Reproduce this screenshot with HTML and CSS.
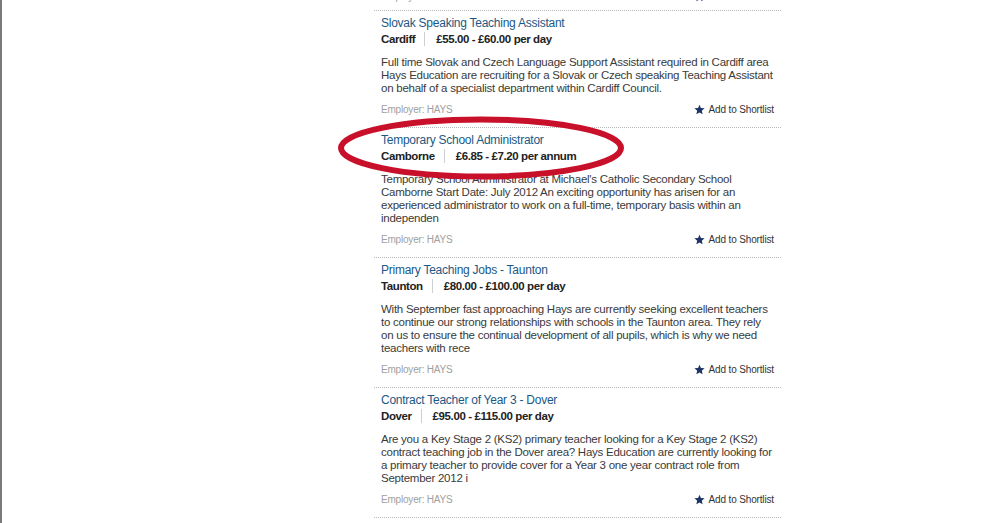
FILE: index.html
```html
<!DOCTYPE html>
<html>
<head>
<meta charset="utf-8">
<link rel="stylesheet" href="styles.css">
</head>
<body>
<div class="frame">
  <div class="list">
    <div class="tail">
      <span class="employer">Employer: HAYS</span>
      <span class="shortlist"><svg class="star" viewBox="0 0 24 24"><path d="M12 1.5l3.1 7.4 8 .6-6.1 5.2 1.9 7.8L12 18.3l-6.9 4.2 1.9-7.8L.9 9.5l8-.6z"/></svg>Add to Shortlist</span>
    </div>
    <div class="job">
      <div class="title">Slovak Speaking Teaching Assistant</div>
      <div class="meta"><span class="loc">Cardiff</span><span class="pay">£55.00 - £60.00 per day</span></div>
      <p class="desc">Full time Slovak and Czech Language Support Assistant required in Cardiff area<br>Hays Education are recruiting for a Slovak or Czech speaking Teaching Assistant<br>on behalf of a specialist department within Cardiff Council.</p>
      <div class="foot">
        <span class="employer">Employer: HAYS</span>
        <span class="shortlist"><svg class="star" viewBox="0 0 24 24"><path d="M12 1.5l3.1 7.4 8 .6-6.1 5.2 1.9 7.8L12 18.3l-6.9 4.2 1.9-7.8L.9 9.5l8-.6z"/></svg>Add to Shortlist</span>
      </div>
    </div>
    <div class="job">
      <div class="title">Temporary School Administrator</div>
      <div class="meta"><span class="loc">Camborne</span><span class="pay">£6.85 - £7.20 per annum</span></div>
      <p class="desc">Temporary School Administrator at Michael's Catholic Secondary School<br>Camborne Start Date: July 2012 An exciting opportunity has arisen for an<br>experienced administrator to work on a full-time, temporary basis within an<br>independen</p>
      <div class="foot">
        <span class="employer">Employer: HAYS</span>
        <span class="shortlist"><svg class="star" viewBox="0 0 24 24"><path d="M12 1.5l3.1 7.4 8 .6-6.1 5.2 1.9 7.8L12 18.3l-6.9 4.2 1.9-7.8L.9 9.5l8-.6z"/></svg>Add to Shortlist</span>
      </div>
    </div>
    <div class="job">
      <div class="title">Primary Teaching Jobs - Taunton</div>
      <div class="meta"><span class="loc">Taunton</span><span class="pay">£80.00 - £100.00 per day</span></div>
      <p class="desc">With September fast approaching Hays are currently seeking excellent teachers<br>to continue our strong relationships with schools in the Taunton area. They rely<br>on us to ensure the continual development of all pupils, which is why we need<br>teachers with rece</p>
      <div class="foot">
        <span class="employer">Employer: HAYS</span>
        <span class="shortlist"><svg class="star" viewBox="0 0 24 24"><path d="M12 1.5l3.1 7.4 8 .6-6.1 5.2 1.9 7.8L12 18.3l-6.9 4.2 1.9-7.8L.9 9.5l8-.6z"/></svg>Add to Shortlist</span>
      </div>
    </div>
    <div class="job">
      <div class="title">Contract Teacher of Year 3 - Dover</div>
      <div class="meta"><span class="loc">Dover</span><span class="pay">£95.00 - £115.00 per day</span></div>
      <p class="desc">Are you a Key Stage 2 (KS2) primary teacher looking for a Key Stage 2 (KS2)<br>contract teaching job in the Dover area? Hays Education are currently looking for<br>a primary teacher to provide cover for a Year 3 one year contract role from<br>September 2012 i</p>
      <div class="foot">
        <span class="employer">Employer: HAYS</span>
        <span class="shortlist"><svg class="star" viewBox="0 0 24 24"><path d="M12 1.5l3.1 7.4 8 .6-6.1 5.2 1.9 7.8L12 18.3l-6.9 4.2 1.9-7.8L.9 9.5l8-.6z"/></svg>Add to Shortlist</span>
      </div>
    </div>
    <div class="job">
      <div class="title">Primary Teacher - Bristol</div>
    </div>
  </div>
  <svg class="ring" viewBox="0 0 290 66" width="290" height="66"><ellipse cx="145" cy="33" rx="140" ry="28.5"/></svg>
</div>
</body>
</html>
```

FILE: styles.css
```css
html, body {
  margin: 0;
  padding: 0;
  background: #fff;
  overflow: hidden;
}
body {
  font-family: "Liberation Sans", Arial, sans-serif;
  width: 1000px;
  height: 523px;
}
.frame {
  position: relative;
  width: 998px;
  height: 523px;
  border-left: 2px solid #7a7a7a;
  overflow: hidden;
}
.list {
  width: 407px;
  margin-left: 372px;
  margin-top: -10px;
}
.tail {
  display: flex;
  justify-content: space-between;
  align-items: center;
  height: 14px;
  padding: 0 7px 6px 7px;
}
.job {
  border-top: 1px dotted #b8b8b8;
  padding: 4px 7px 10px 7px;
}
.title {
  font-size: 12px;
  line-height: 16px;
  letter-spacing: -0.25px;
  color: #1b5885;
}
.meta {
  display: flex;
  align-items: center;
  font-size: 11.5px;
  line-height: 16px;
  letter-spacing: -0.4px;
  font-weight: bold;
  color: #222;
}
.loc {
  padding-right: 9px;
  border-right: 1px solid #cfcfcf;
  line-height: 14px;
}
.pay {
  padding-left: 11px;
}
.desc {
  margin: 9px 0 0 0;
  font-size: 11.5px;
  line-height: 13px;
  letter-spacing: -0.25px;
  white-space: nowrap;
  color: #3a3a3a;
}
.foot {
  display: flex;
  justify-content: space-between;
  align-items: center;
  margin-top: 8px;
  height: 14px;
}
.employer {
  font-size: 10px;
  line-height: 14px;
  letter-spacing: -0.2px;
  color: #a0a0a0;
}
.shortlist {
  display: flex;
  align-items: center;
  font-size: 10px;
  line-height: 14px;
  letter-spacing: -0.15px;
  color: #333;
}
.star {
  width: 11px;
  height: 11px;
  margin-right: 4px;
  margin-top: -2px;
  fill: #1d3466;
}
.ring {
  position: absolute;
  left: 334px;
  top: 115px;
  fill: none;
  stroke: #c8102a;
  stroke-width: 6;
}
```
